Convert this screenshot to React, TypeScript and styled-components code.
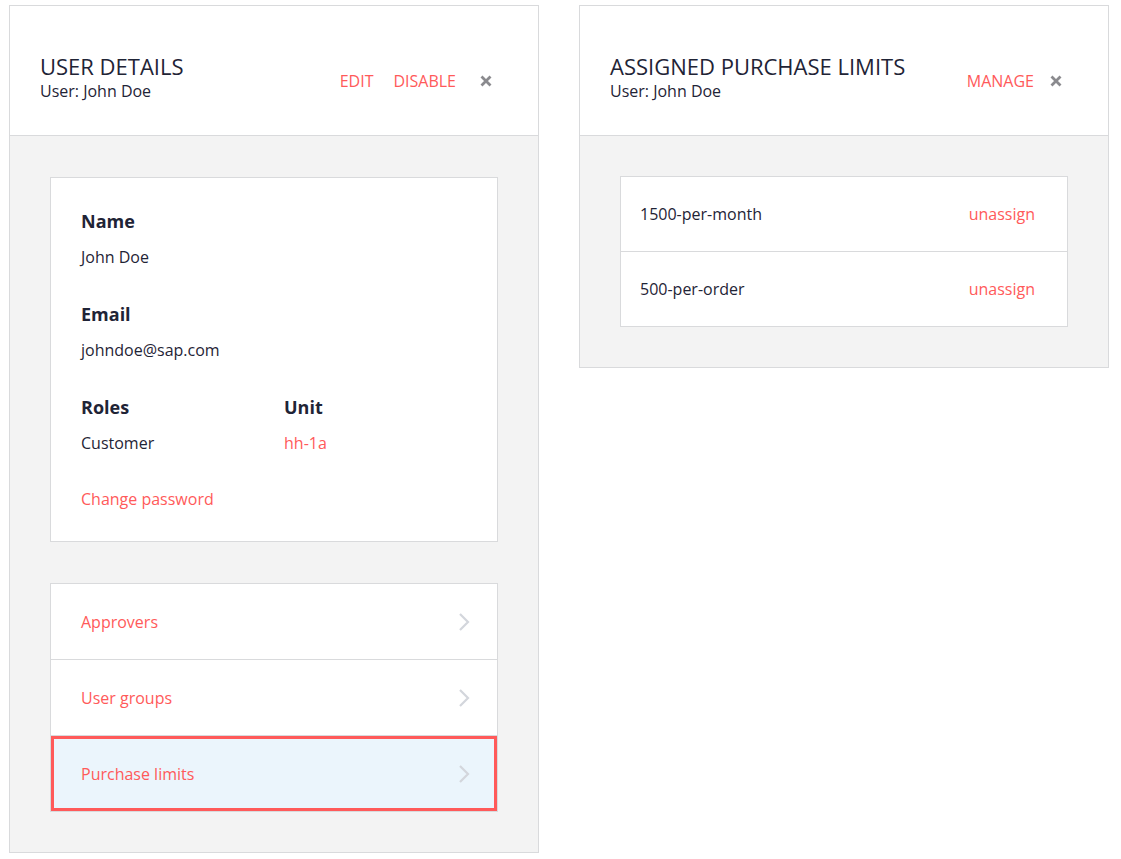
import React from 'react';
import styled, { createGlobalStyle } from 'styled-components';

const GlobalStyle = createGlobalStyle`
  html, body {
    margin: 0;
    padding: 0;
    background: #ffffff;
    font-family: 'Open Sans', 'Noto Sans', sans-serif;
    color: #1f2436;
  }
  * {
    box-sizing: border-box;
  }
`;

const RED = '#ff5a5a';
const BORDER = '#d9dadc';

const Page = styled.div`
  display: flex;
  align-items: flex-start;
  gap: 40px;
  padding: 5px 0 0 9px;
`;

const Panel = styled.section`
  width: 530px;
  border: 1px solid ${BORDER};
  background: #ffffff;
`;

const Header = styled.header`
  height: 130px;
  display: flex;
  align-items: flex-start;
  justify-content: space-between;
  padding: 46px 46px 0 30px;
  border-bottom: 1px solid ${BORDER};
`;

const Titles = styled.div`
  display: flex;
  flex-direction: column;
`;

const Title = styled.h2`
  margin: 0;
  font-size: 22px;
  line-height: 28px;
  font-weight: 400;
  text-transform: uppercase;
`;

const Subtitle = styled.div`
  font-size: 16px;
  line-height: 22px;
`;

const Actions = styled.div`
  display: flex;
  align-items: center;
  gap: 20px;
  padding-top: 18px;
`;

const ActionLink = styled.a`
  color: ${RED};
  font-size: 16px;
  line-height: 22px;
  text-transform: uppercase;
  cursor: pointer;
`;

const CloseButton = styled.button<{ $gap: number }>`
  border: none;
  background: none;
  padding: 0;
  margin-left: ${(p) => p.$gap - 20}px;
  display: flex;
  cursor: pointer;
`;

const Body = styled.div<{ $top: number }>`
  background: #f3f3f3;
  padding: ${(p) => p.$top}px 40px 40px;
  display: flex;
  flex-direction: column;
  gap: 41px;
`;

const Card = styled.div`
  background: #ffffff;
  border: 1px solid ${BORDER};
  padding: 31px 30px 30px;
`;

const Field = styled.div`
  margin-bottom: 33px;
`;

const FieldGrid = styled.div`
  display: grid;
  grid-template-columns: 203px 1fr;
  margin-bottom: 32px;
`;

const Label = styled.div`
  font-size: 18px;
  line-height: 24px;
  font-weight: 700;
  margin-bottom: 12px;
`;

const Value = styled.div<{ $link?: boolean }>`
  font-size: 16px;
  line-height: 24px;
  color: ${(p) => (p.$link ? RED : '#1f2436')};
`;

const List = styled.div`
  background: #ffffff;
  border: 1px solid ${BORDER};
`;

const NavRow = styled.div<{ $active?: boolean }>`
  height: 76px;
  display: flex;
  align-items: center;
  justify-content: space-between;
  padding: 1px 27px 0 30px;
  color: ${RED};
  font-size: 16px;
  border-top: 1px solid ${BORDER};
  background: ${(p) => (p.$active ? '#ebf5fc' : '#ffffff')};
  box-shadow: ${(p) => (p.$active ? `inset 0 0 0 3px ${RED}` : 'none')};
  background-clip: padding-box;
  cursor: pointer;

  &:first-child {
    height: 75px;
    border-top: none;
  }
`;

const LimitRow = styled.div`
  height: 75px;
  display: flex;
  align-items: center;
  justify-content: space-between;
  padding: 0 32px 0 19px;
  font-size: 16px;
  border-top: 1px solid ${BORDER};

  &:first-child {
    height: 74px;
    border-top: none;
  }
`;

const Unassign = styled.a`
  color: ${RED};
  cursor: pointer;
`;

const CloseIcon = () => (
  <svg width="12" height="12" viewBox="0 0 12 12">
    <path d="M1.5 1.5 L10.5 10.5 M10.5 1.5 L1.5 10.5" stroke="#8a8a8e" strokeWidth="2.8" />
  </svg>
);

const Chevron = () => (
  <svg width="12" height="20" viewBox="0 0 12 20">
    <path d="M2 2 L10 10 L2 18" fill="none" stroke="#d3d6dc" strokeWidth="2.2" />
  </svg>
);

const navItems = ['Approvers', 'User groups', 'Purchase limits'];
const limits = ['1500-per-month', '500-per-order'];

export default function App() {
  return (
    <>
      <GlobalStyle />
      <Page>
        <Panel>
          <Header>
            <Titles>
              <Title>User details</Title>
              <Subtitle>User: John Doe</Subtitle>
            </Titles>
            <Actions>
              <ActionLink>Edit</ActionLink>
              <ActionLink>Disable</ActionLink>
              <CloseButton $gap={24} aria-label="close">
                <CloseIcon />
              </CloseButton>
            </Actions>
          </Header>
          <Body $top={41}>
            <Card>
              <Field>
                <Label>Name</Label>
                <Value>John Doe</Value>
              </Field>
              <Field>
                <Label>Email</Label>
                <Value>johndoe@sap.com</Value>
              </Field>
              <FieldGrid>
                <div>
                  <Label>Roles</Label>
                  <Value>Customer</Value>
                </div>
                <div>
                  <Label>Unit</Label>
                  <Value $link>hh-1a</Value>
                </div>
              </FieldGrid>
              <Value $link>Change password</Value>
            </Card>
            <List>
              {navItems.map((item) => (
                <NavRow key={item} $active={item === 'Purchase limits'}>
                  <span>{item}</span>
                  <Chevron />
                </NavRow>
              ))}
            </List>
          </Body>
        </Panel>
        <Panel>
          <Header>
            <Titles>
              <Title>Assigned purchase limits</Title>
              <Subtitle>User: John Doe</Subtitle>
            </Titles>
            <Actions>
              <ActionLink>Manage</ActionLink>
              <CloseButton $gap={16} aria-label="close">
                <CloseIcon />
              </CloseButton>
            </Actions>
          </Header>
          <Body $top={40}>
            <List>
              {limits.map((l) => (
                <LimitRow key={l}>
                  <span>{l}</span>
                  <Unassign>unassign</Unassign>
                </LimitRow>
              ))}
            </List>
          </Body>
        </Panel>
      </Page>
    </>
  );
}
